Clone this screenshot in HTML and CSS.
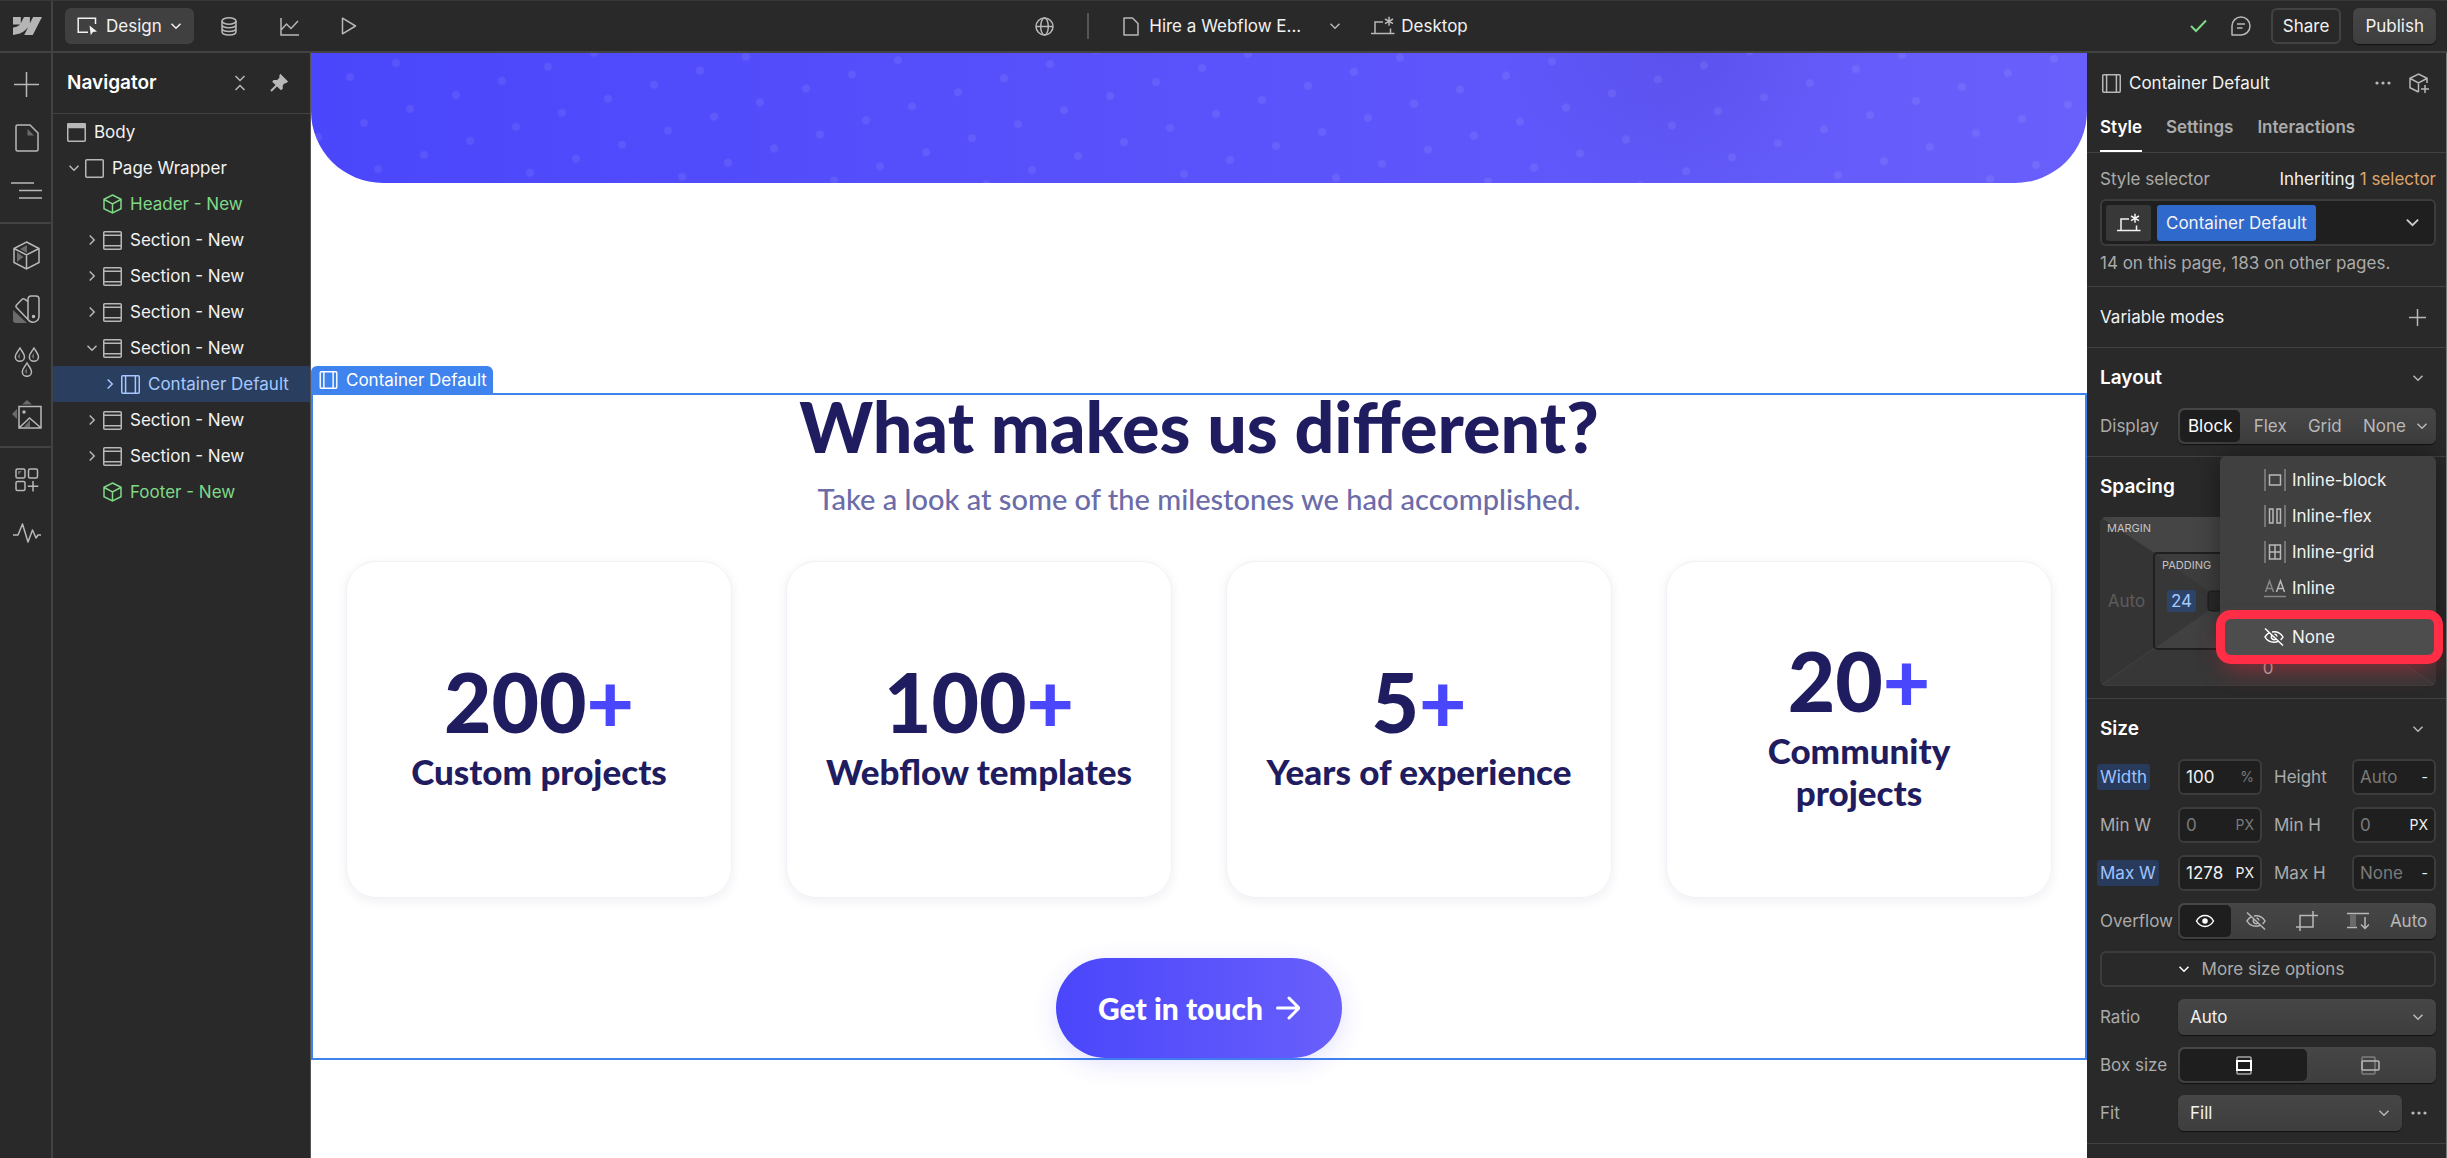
FILE: index.html
```html
<!DOCTYPE html>
<html lang="en">
<head>
<meta charset="UTF-8" />
<meta name="viewport" content="width=device-width, initial-scale=1" />
<title>Designer</title>
<link rel="stylesheet" href="styles.css">
</head>
<body>

<!-- Shared icons -->
<svg class="sprite" aria-hidden="true">
  <symbol id="i-section" viewBox="0 0 19 19"><rect x=".75" y=".75" width="17.5" height="17.5" rx="1"/><path d="M1 4.2h17M1 14.8h17"/></symbol>
  <symbol id="i-container" viewBox="0 0 19 19"><rect x=".75" y=".75" width="17.5" height="17.5" rx="1"/><path d="M4.6 1v17M14.4 1v17"/></symbol>
  <symbol id="i-box" viewBox="0 0 19 19"><rect x=".75" y=".75" width="17.5" height="17.5" rx="1"/></symbol>
  <symbol id="i-body" viewBox="0 0 19 19"><rect x=".75" y=".75" width="17.5" height="17.5" rx="1"/><path d="M1 1h17v3.4H1z" fill="currentColor"/></symbol>
  <symbol id="i-cube" viewBox="0 0 19 20"><path d="M9.5 1 18 5.3v9.4L9.5 19 1 14.7V5.3zM1.2 5.5l8.3 4.3 8.3-4.3M9.5 9.8V19"/></symbol>
  <symbol id="i-down" viewBox="0 0 12 12"><path d="M1.5 3.7 6 8.2l4.5-4.5"/></symbol>
  <symbol id="i-right" viewBox="0 0 12 12"><path d="M3.7 1.5 8.2 6l-4.500 4.5"/></symbol>
  <symbol id="i-dots" viewBox="0 0 18 18"><g fill="currentColor" stroke="none"><circle cx="3" cy="9" r="1.6"/><circle cx="9" cy="9" r="1.6"/><circle cx="15" cy="9" r="1.6"/></g></symbol>
  <symbol id="i-desktop" viewBox="0 0 24 20"><path d="M0 17.5h23.5M4 17V6h8M19.5 12.5V17M18 .8v9M14 3l8 4.600M22 3l-8 4.600"/></symbol>
  <symbol id="i-hide" viewBox="0 0 20 20"><path d="M1 1.5 19 18.5M5 5.8C3 7 1.8 8.7 1 10c1.800 3.200 5 5.200 9 5.200 1.300 0 2.600-.2 3.700-.7M8 4.900c.6-.1 1.300-.1 2-.1 4 0 7.200 2 9 5.200-.5 1-1.400 2-2.400 2.900M7.500 8.500c-1 3 2 5.300 4.500 3.500M10.500 7c1.400.2 2.300 1.200 2.500 2.500"/></symbol>
</svg>

<div id="app">
  <header class="topbar">
    <div class="top-left">
      <a class="logo" href="#" aria-label="Home">
        <svg width="29" height="18" viewBox="0 0 29 18"><path fill="#b5b5b5" d="M29 0 19.800 18h-8.600L15 10.600h-.2C11.600 14.700 6.900 17.400 0 18v-7.400s4.400-.3 7-3H0V0h7.800v6.300L11 0h5.900v6.300L20.100 0z"/></svg>
      </a>
      <button class="design-btn">
        <svg width="21" height="19" viewBox="0 0 21 19"><path d="M11 15.2H1.2V1.2h17.300V7"/><path d="m12.500 8.500 7.500 6-4 .6-2.200 3.200z" fill="currentColor" stroke="none"/></svg>
        Design
        <svg width="12" height="12"><use href="#i-down"/></svg>
      </button>
      <div class="tools">
        <button aria-label="CMS"><svg width="18" height="19" viewBox="0 0 18 19"><ellipse cx="9" cy="4" rx="7" ry="3.2"/><path d="M2 4v10.800C2 16.600 5 18 9 18s7-1.400 7-3.200V4M2 7.600c0 1.800 3 3.200 7 3.200s7-1.400 7-3.200M2 11.200c0 1.800 3 3.200 7 3.200s7-1.400 7-3.200"/></svg></button>
        <button aria-label="Insights"><svg width="19" height="19" viewBox="0 0 19 19"><path d="M1 1v17h18M1.500 12.500 6.500 7l4.500 4.500L18 4"/></svg></button>
        <button aria-label="Preview"><svg width="16" height="18" viewBox="0 0 16 18"><path d="M1.500 1.200v15.600L14.500 9z" stroke-linejoin="round"/></svg></button>
      </div>
    </div>

    <div class="top-center">
      <button aria-label="Locale"><svg width="19" height="19" viewBox="0 0 19 19"><circle cx="9.5" cy="9.5" r="8.5"/><ellipse cx="9.5" cy="9.5" rx="3.8" ry="8.5"/><path d="M1 9.500h17"/></svg></button>
      <span class="sep"></span>
      <button class="page-btn">
        <svg width="16" height="19" viewBox="0 0 16 19"><path d="M1 1h8.500L15 6.500V18H1z" stroke-linejoin="round"/></svg>
        <span class="page-name">Hire a Webflow E...</span>
        <svg width="12" height="12"><use href="#i-down"/></svg>
      </button>
      <button class="device-btn"><svg width="24" height="20"><use href="#i-desktop"/></svg>Desktop</button>
    </div>

    <div class="top-right">
      <svg class="green" width="17" height="14" viewBox="0 0 17 14"><path d="m1 7 5 5L16 1.500" stroke-width="2"/></svg>
      <button aria-label="Comments"><svg width="20" height="20" viewBox="0 0 20 20"><path d="M1 19v-9a9 9 0 1 1 9 9zM6 8h8M6 12h5.500" stroke-linejoin="round"/></svg></button>
      <button class="share">Share</button>
      <button class="publish">Publish</button>
    </div>
  </header>

  <div class="workspace">
    <nav class="rail" aria-label="Panels">
      <div class="rail-group">
        <button aria-label="Add"><svg width="25" height="25" viewBox="0 0 25 25"><path d="M12.500 0v25M0 12.500h25"/></svg></button>
        <button aria-label="Pages"><svg width="24" height="28" viewBox="0 0 24 28"><path d="M2.500 1H15l8 8v16.500a1.500 1.500 0 0 1-1.500 1.500h-19A1.500 1.500 0 0 1 1 25.500v-23A1.500 1.500 0 0 1 2.500 1z"/><path d="M12.500 5v6.500H19z" class="shade"/></svg></button>
        <button aria-label="Navigator"><svg width="31" height="17" viewBox="0 0 31 17"><path d="M0 1h23M8 8.500h23M8 16h23"/></svg></button>
      </div>
      <div class="rail-group">
        <button aria-label="Components"><svg width="27" height="29" viewBox="0 0 27 29"><path class="shade" d="M14 4v8L7 8zM4 11l6.500 5L4 21z"/><path d="M13.500 1 26 7.500v14L13.500 28 1 21.500v-14zM1 7.500 13.500 14 26 7.500M13.500 14v14"/></svg></button>
        <button aria-label="Variables"><svg width="28" height="28" viewBox="0 0 28 28"><path class="shade" d="M0 15l14 13H3a3 3 0 0 1-3-3z"/><path d="M15 4a3 3 0 0 1 3-3h5a3 3 0 0 1 3 3v17a6 6 0 0 1-11 3.500zM15 6.500 11.500 4.200a2 2 0 0 0-2.600.3L3.500 10a2 2 0 0 0 0 2.600L15 24.500"/><circle cx="20.500" cy="21.500" r="1" fill="currentColor"/></svg></button>
        <button aria-label="Styles"><svg width="26" height="30" viewBox="0 0 26 30"><path d="M6 1c2 3.500 4.500 6 4.500 8.700a4.600 4.600 0 0 1-9.200 0C1.300 7 4 4.500 6 1zM20 1c2 3.500 4.500 6 4.500 8.700a4.600 4.600 0 0 1-9.200 0C15.300 7 18 4.500 20 1zM13 16c2 3.500 4.500 6 4.500 8.700a4.600 4.600 0 0 1-9.200 0C8.300 22 11 19.500 13 16z"/><path class="shade" d="M6 6v6L3.500 9.500zM20 6v6l-2.500-2.500zM13 21v6l-2.500-2.500z"/></svg></button>
        <button aria-label="Assets"><svg width="32" height="29" viewBox="0 0 32 29"><path class="shade" d="M11 4.500 16 0l5 4.500zM6 9v10l-5-5zM13 27l6-7v7z"/><path d="M8 6.500h22V28H8zM8.500 27.500 18.500 18 29.500 27.500"/><circle cx="13" cy="12" r="1" fill="currentColor"/></svg></button>
      </div>
      <div class="rail-group">
        <button aria-label="Apps"><svg width="24" height="24" viewBox="0 0 24 24"><rect x="1" y="1" width="9" height="9" rx="1.5"/><rect x="13.5" y="1" width="9" height="9" rx="1.5"/><rect x="1" y="13.5" width="9" height="9" rx="1.5"/><path d="M18 13v10.500M12.800 18.200h10.500"/><path class="shade" d="M3 3h4L3 7z"/></svg></button>
        <button aria-label="Audit"><svg width="28" height="20" viewBox="0 0 28 20"><path d="M0 12h5L9.500 1 15 19l4.500-12L23 15l2-3h3" stroke-linejoin="round"/></svg></button>
      </div>
    </nav>

    <aside class="navigator">
      <div class="nav-head">
        <h2>Navigator</h2>
        <button aria-label="Collapse all"><svg width="12" height="16" viewBox="0 0 12 16"><path d="m1.500 1 4.500 4.500L10.500 1M1.500 15 6 10.500l4.500 4.500"/></svg></button>
        <button aria-label="Pin"><svg width="18" height="18" viewBox="0 0 18 18"><path d="M1 17l6-6" stroke-width="2"/><path d="m10.500 1 6.500 6.500-1.300.9-1-.2-2.700 2.800v3.500l-1 .8L3.200 7.700l.8-1H7.500l2.800-3-.3-1.500z" fill="currentColor"/></svg></button>
      </div>
      <ul class="tree">
        <li class="lv0"><svg class="tw"></svg><svg width="19" height="19"><use href="#i-body"/></svg>Body</li>
        <li class="lv1"><svg class="tw"><use href="#i-down"/></svg><svg width="19" height="19"><use href="#i-box"/></svg>Page Wrapper</li>
        <li class="lv2 green"><svg class="tw"></svg><svg width="19" height="20"><use href="#i-cube"/></svg>Header - New</li>
        <li class="lv2"><svg class="tw"><use href="#i-right"/></svg><svg width="19" height="19"><use href="#i-section"/></svg>Section - New</li>
        <li class="lv2"><svg class="tw"><use href="#i-right"/></svg><svg width="19" height="19"><use href="#i-section"/></svg>Section - New</li>
        <li class="lv2"><svg class="tw"><use href="#i-right"/></svg><svg width="19" height="19"><use href="#i-section"/></svg>Section - New</li>
        <li class="lv2"><svg class="tw"><use href="#i-down"/></svg><svg width="19" height="19"><use href="#i-section"/></svg>Section - New</li>
        <li class="lv3 selected"><svg class="tw"><use href="#i-right"/></svg><svg width="19" height="19"><use href="#i-container"/></svg>Container Default</li>
        <li class="lv2"><svg class="tw"><use href="#i-right"/></svg><svg width="19" height="19"><use href="#i-section"/></svg>Section - New</li>
        <li class="lv2"><svg class="tw"><use href="#i-right"/></svg><svg width="19" height="19"><use href="#i-section"/></svg>Section - New</li>
        <li class="lv2 green"><svg class="tw"></svg><svg width="19" height="20"><use href="#i-cube"/></svg>Footer - New</li>
      </ul>
    </aside>

    <main class="canvas">
      <div class="hero">
        <svg width="100%" height="100%">
          <defs>
            <pattern id="dots" width="48.08" height="48.08" patternUnits="userSpaceOnUse" patternTransform="translate(39 24) rotate(-17) translate(-24 -24)">
              <circle cx="24" cy="24" r="4" fill="#fff" fill-opacity=".08"/>
            </pattern>
          </defs>
          <rect width="100%" height="100%" fill="url(#dots)"/>
        </svg>
      </div>

      <section class="stage">
        <span class="sel-tag"><svg width="19" height="18"><use href="#i-container"/></svg>Container Default</span>
        <div class="container">
          <h1>What makes us different?</h1>
          <p class="lead">Take a look at some of the milestones we had accomplished.</p>
          <div class="cards">
            <article class="card"><strong>200<i>+</i></strong><h3>Custom projects</h3></article>
            <article class="card"><strong>100<i>+</i></strong><h3>Webflow templates</h3></article>
            <article class="card"><strong>5<i>+</i></strong><h3>Years of experience</h3></article>
            <article class="card"><strong>20<i>+</i></strong><h3>Community<br>projects</h3></article>
          </div>
          <a class="cta" href="#">Get in touch
            <svg width="24" height="24" viewBox="0 0 24 24"><path d="M1.500 12h21M13 2l10 10-10 10" stroke-width="3" stroke-linecap="round" stroke-linejoin="round"/></svg>
          </a>
        </div>
      </section>
    </main>

    <aside class="panel">
      <div class="panel-head">
        <svg width="19" height="19"><use href="#i-container"/></svg>
        <span class="grow">Container Default</span>
        <button aria-label="More"><svg width="18" height="18"><use href="#i-dots"/></svg></button>
        <button aria-label="Create component"><svg width="20" height="20" viewBox="0 0 20 20"><path d="M9.500 19 1 14.700V5.300L9.500 1 18 5.300V10M1.200 5.500l8.300 4.300L17.800 5.500M9.500 9.800V19M16 12v8M12 16h8"/></svg></button>
      </div>
      <div class="tabs">
        <button class="active">Style</button>
        <button>Settings</button>
        <button>Interactions</button>
      </div>

      <section class="selector">
        <div class="selector-head"><span>Style selector</span><span class="inherit">Inheriting <a href="#">1 selector</a></span></div>
        <div class="selector-box">
          <button class="state" aria-label="Breakpoint"><svg width="24" height="20"><use href="#i-desktop"/></svg></button>
          <button class="token">Container Default</button>
          <button class="open" aria-label="Open"><svg width="15" height="15"><use href="#i-down"/></svg></button>
        </div>
        <p>14 on this page, 183 on other pages.</p>
      </section>

      <section class="variable">
        <span>Variable modes</span>
        <button aria-label="Add mode"><svg width="17" height="17" viewBox="0 0 17 17"><path d="M8.500 0v17M0 8.500h17"/></svg></button>
      </section>

      <section>
        <div class="sec-head"><h2>Layout</h2><button aria-label="Collapse"><svg width="12" height="12"><use href="#i-down"/></svg></button></div>
        <div class="row">
          <span class="lbl">Display</span>
          <div class="seg display">
            <button class="on">Block</button><button>Flex</button><button>Grid</button><button class="none">None <svg width="12" height="12"><use href="#i-down"/></svg></button>
            <div class="menu">
              <button><svg width="22" height="22" viewBox="0 0 22 22"><path d="M1 0v22M21 0v22" opacity=".6"/><rect x="5.5" y="6" width="11" height="10"/></svg>Inline-block</button>
              <button><svg width="22" height="22" viewBox="0 0 22 22"><path d="M1 0v22M21 0v22" opacity=".6"/><rect x="5.5" y="4" width="3.5" height="14"/><rect x="13" y="4" width="3.5" height="14"/></svg>Inline-flex</button>
              <button><svg width="22" height="22" viewBox="0 0 22 22"><path d="M1 0v22M21 0v22" opacity=".6"/><path d="M5.500 4h11v14h-11zM11 4v14M5.500 11h11"/></svg>Inline-grid</button>
              <button><svg width="22" height="22" viewBox="0 0 22 22"><path d="M0 19.500h22M1.500 15 5.500 4l4 11M2.800 11.500h5.400" opacity=".6"/><path d="m12.500 15 4-11 4 11M13.800 11.500h5.400"/></svg>Inline</button>
              <button class="picked"><svg width="20" height="20"><use href="#i-hide"/></svg>None</button>
            </div>
          </div>
        </div>
      </section>

      <section>
        <div class="sec-head"><h2>Spacing</h2></div>
        <div class="spacing">
          <svg class="bevel" viewBox="0 0 336 169" preserveAspectRatio="none">
            <path d="M0 0h336v169H0z" fill="#343434"/>
            <path d="M0 0h336l-53 35H53z" fill="#454545"/>
            <path d="M0 169h336l-53-37H53z" fill="#373737" stroke="#424242"/>
          </svg>
          <span class="sp-name">Margin</span>
          <button class="sp-left">Auto</button>
          <button class="sp-bottom">0</button>
          <div class="padding">
            <svg class="bevel" viewBox="0 0 226 94" preserveAspectRatio="none">
              <path d="M0 0h226v94H0z" fill="#373737"/>
              <path d="M0 0h226l-53 37H53z" fill="#3d3d3d"/>
              <path d="M0 94h226l-53-37H53z" fill="#414141"/>
              <rect x="53" y="37" width="120" height="20" rx="3" fill="#292929" stroke="#1d1d1d"/>
            </svg>
            <span class="sp-name">Padding</span>
            <button class="sp-val">24</button>
          </div>
        </div>
      </section>

      <section>
        <div class="sec-head"><h2>Size</h2><button aria-label="Collapse"><svg width="12" height="12"><use href="#i-down"/></svg></button></div>
        <div class="sizes">
          <label class="lbl set" for="w">Width</label><div class="field"><input id="w" value="100"><span class="unit dim">%</span></div>
          <label class="lbl" for="h">Height</label><div class="field"><input id="h" placeholder="Auto"><span class="unit">-</span></div>
          <label class="lbl" for="minw">Min W</label><div class="field"><input id="minw" placeholder="0"><span class="unit dim">PX</span></div>
          <label class="lbl" for="minh">Min H</label><div class="field"><input id="minh" placeholder="0"><span class="unit">PX</span></div>
          <label class="lbl set" for="maxw">Max W</label><div class="field"><input id="maxw" value="1278"><span class="unit">PX</span></div>
          <label class="lbl" for="maxh">Max H</label><div class="field"><input id="maxh" placeholder="None"><span class="unit">-</span></div>
        </div>
        <div class="row">
          <span class="lbl">Overflow</span>
          <div class="seg five">
            <button class="on" aria-label="Visible"><svg width="20" height="14" viewBox="0 0 20 14"><path d="M1.500 7c2-3.500 5-5.400 8.500-5.400S16.500 3.500 18.500 7c-2 3.500-5 5.400-8.500 5.400S3.500 10.500 1.500 7z"/><circle cx="10" cy="7" r="2" fill="currentColor"/></svg></button>
            <button aria-label="Hidden"><svg width="20" height="20"><use href="#i-hide"/></svg></button>
            <button aria-label="Clip"><svg width="22" height="20" viewBox="0 0 22 20"><path d="M4 20V4.500h18M0 16h17V0"/></svg></button>
            <button aria-label="Scroll"><svg width="22" height="18" viewBox="0 0 22 18"><path d="M0 1.500h22M0 15.500h10M18 5v11M14 12.500l4 4 4-4"/><path class="shade" d="M3 2h6v13H3z"/></svg></button>
            <button>Auto</button>
          </div>
        </div>
        <button class="more"><svg width="12" height="12"><use href="#i-down"/></svg>More size options</button>
        <div class="row">
          <label class="lbl" for="ratio">Ratio</label>
          <div class="select"><select id="ratio"><option>Auto</option></select><svg width="12" height="12"><use href="#i-down"/></svg></div>
        </div>
        <div class="row">
          <span class="lbl">Box size</span>
          <div class="seg two">
            <button class="on" aria-label="Border box"><svg width="16" height="19" viewBox="0 0 16 19"><rect x="1" y="1" width="14" height="17" rx="1" opacity=".6"/><rect x="1" y="5" width="14" height="9" stroke-width="2"/></svg></button>
            <button aria-label="Content box"><svg width="19" height="19" viewBox="0 0 19 19"><rect x="1" y="1" width="13" height="17" rx="1" opacity=".5"/><rect x="1" y="5" width="17" height="9" rx="1"/></svg></button>
          </div>
        </div>
        <div class="row">
          <label class="lbl" for="fit">Fit</label>
          <div class="select"><select id="fit"><option>Fill</option></select><svg width="12" height="12"><use href="#i-down"/></svg></div>
          <button class="fit-more" aria-label="Position"><svg width="18" height="18"><use href="#i-dots"/></svg></button>
        </div>
      </section>
    </aside>
  </div>
</div>

</body>
</html>
```

FILE: styles.css
```css
:root {
  --bg: #292929;
  --line: #424242;
  --text: #f2f2f2;
  --muted: #ababab;
  --dim: #7a7a7a;
  --green: #7fd987;
  --blue: #3f83ee;
  --navy: #1f1c5f;
  --control: linear-gradient(#464646, #3e3e3e);
}

* {
  box-sizing: border-box;
}

html, body {
  margin: 0;
  height: 100%;
  overflow: hidden;
  font-family: Inter, sans-serif;
  font-size: 17px;
  line-height: 24px;
  color: var(--text);
  background: var(--bg);
}

button, input, select {
  font: inherit;
  color: inherit;
  border: 0;
  padding: 0;
  margin: 0;
  background: none;
}

button {
  display: flex;
  align-items: center;
  justify-content: center;
}

h1, h2, h3, p, ul {
  margin: 0;
  padding: 0;
}

svg {
  flex: none;
  fill: none;
  stroke: currentColor;
  stroke-width: 1.5px;
}

.sprite {
  position: absolute;
  width: 0;
  height: 0;
}

.shade {
  fill: #6b6b6b;
  stroke: none;
}

.green {
  color: var(--green);
}

.grow {
  flex: 1;
}

#app {
  height: 100%;
  display: flex;
  flex-direction: column;
}

/* Top bar */
.topbar {
  flex: none;
  display: grid;
  grid-template-columns: 1fr auto 1fr;
  height: 53px;
  border-top: 1px solid #383838;
  border-bottom: 2px solid var(--line);
}

.top-left, .top-center, .top-right, .tools {
  display: flex;
  align-items: center;
}

.logo {
  display: flex;
  align-items: center;
  align-self: stretch;
  width: 53px;
  padding-left: 13px;
  border-right: 2px solid var(--line);
}

.logo svg {
  stroke: none;
}

.design-btn {
  gap: 8px;
  height: 36px;
  margin-left: 12px;
  padding: 0 12px;
  border-radius: 6px;
  background: #404040;
}

.tools {
  margin-left: 26px;
  gap: 42px;
  color: #b8b8b8;
}

.top-center {
  padding-left: 56px;
}

.top-center svg {
  color: #b8b8b8;
}

.sep {
  width: 2px;
  height: 26px;
  margin: 0 34px 0 33px;
  background: #555;
}

.page-btn {
  gap: 10px;
}

.page-name {
  margin-right: 18px;
}

.device-btn {
  gap: 6px;
  margin-left: 30px;
}

.top-right {
  justify-content: flex-end;
  padding-right: 11px;
}

.top-right > button:nth-of-type(1) {
  margin: 0 20px 0 24px;
  color: #b8b8b8;
}

.share, .publish {
  height: 36px;
  padding: 0 12px;
  border-radius: 6px;
}

.share {
  border: 2px solid var(--line);
  margin-right: 12px;
  padding: 0 10px;
}

.publish {
  background: var(--control);
  box-shadow: 0 1px 1px #111;
}

.workspace {
  flex: 1;
  min-height: 0;
  display: flex;
}

/* Left rail */
.rail {
  flex: none;
  width: 53px;
  border-right: 2px solid var(--line);
  color: #b8b8b8;
}

.rail-group {
  padding: 5px 0;
}

.rail-group + .rail-group {
  border-top: 2px solid var(--line);
}

.rail button {
  width: 100%;
  height: 53px;
  padding-left: 2px;
}

/* Navigator */
.navigator {
  flex: none;
  width: 258px;
  border-right: 1px solid #555;
}

.nav-head {
  display: flex;
  align-items: center;
  gap: 24px;
  height: 61px;
  padding: 0 22px 0 14px;
  border-bottom: 1px solid var(--line);
  color: #b8b8b8;
}

.nav-head h2 {
  flex: 1;
}

h2 {
  font-size: 19px;
  font-weight: 600;
  color: #fff;
}

.tree {
  list-style: none;
}

.tree li {
  display: flex;
  align-items: center;
  height: 36px;
}

.tree li > svg:nth-child(2) {
  margin-right: 8px;
}

.tree li:not(.green):not(.selected) > svg {
  color: #b8b8b8;
}

.tw {
  width: 12px;
  height: 12px;
  margin-right: 5px;
}

.lv0 { padding-left: 0; }
.lv0 .tw { width: 9px; }
.lv1 { padding-left: 15px; }
.lv2 { padding-left: 33px; }
.lv3 { padding-left: 51px; }

.tree .selected {
  background: #2a3f60;
  color: #a6c8ff;
}

/* Canvas */
.canvas {
  flex: 1;
  min-width: 0;
  overflow: hidden;
  background: #fff;
  font-family: Lato, sans-serif;
  color: var(--navy);
}

.hero {
  height: 130px;
  overflow: hidden;
  border-radius: 0 0 72px 72px;
  background:
    radial-gradient(circle at 77% -10%, rgba(60, 50, 180, .2), transparent 180px),
    linear-gradient(90deg, #4a46fb, #695ffb);
}

.hero svg {
  display: block;
  stroke: none;
}

.stage {
  padding-top: 183px;
}

.sel-tag {
  display: flex;
  align-items: center;
  gap: 8px;
  width: max-content;
  height: 27px;
  padding: 0 6px 0 8px;
  border-radius: 6px 6px 0 0;
  background: var(--blue);
  color: #fff;
  font-family: Inter, sans-serif;
}

.container {
  display: flex;
  flex-direction: column;
  align-items: center;
  padding: 0 33px;
  border: 2px solid var(--blue);
}

h1 {
  font-size: 70px;
  font-weight: 900;
  line-height: 62px;
}

.lead {
  margin: 19px 0 40px;
  font-size: 29px;
  font-weight: 500;
  line-height: 45px;
  color: #6b6ca8;
}

.cards {
  align-self: stretch;
  display: grid;
  grid-template-columns: repeat(4, 1fr);
  gap: 54px;
}

.card {
  display: flex;
  flex-direction: column;
  align-items: center;
  justify-content: center;
  gap: 16px;
  height: 337px;
  padding: 0 24px;
  border: 1px solid #f0f0f7;
  border-radius: 30px;
  box-shadow: 0 3px 12px rgba(31, 28, 95, .07);
  text-align: center;
}

.card strong {
  font-size: 82px;
  font-weight: 900;
  line-height: 66px;
}

.card i {
  font-style: normal;
  color: #4a46fb;
}

.card h3 {
  font-size: 35px;
  font-weight: 900;
  line-height: 42px;
}

.cta {
  display: flex;
  align-items: center;
  gap: 13px;
  height: 100px;
  margin-top: 60px;
  padding: 0 42px;
  border-radius: 50px;
  background: linear-gradient(90deg, #4a46fb, #695ffb);
  box-shadow: 0 6px 24px rgba(74, 70, 251, .16);
  color: #fff;
  font-size: 30px;
  font-weight: 900;
  text-decoration: none;
}

/* Style panel */
.panel {
  flex: none;
  width: 360px;
  border-right: 1px solid #777;
  overflow: hidden;
}

.panel-head {
  display: flex;
  align-items: center;
  gap: 8px;
  height: 60px;
  padding: 0 17px 0 15px;
}

.panel-head svg {
  color: #b8b8b8;
}

.panel-head button + button {
  margin-left: 9px;
}

.tabs {
  display: flex;
  gap: 24px;
  height: 40px;
  padding: 0 13px;
  border-bottom: 1px solid var(--line);
}

.tabs button {
  align-items: flex-start;
  padding-top: 2px;
  font-weight: 600;
  color: var(--muted);
}

.tabs .active {
  color: #fff;
  border-bottom: 2px solid #fff;
}

.panel section {
  padding: 0 10px 12px 13px;
  border-bottom: 1px solid var(--line);
}

.panel .selector {
  padding-top: 14px;
  padding-bottom: 11px;
  color: var(--muted);
}

.selector-head {
  display: flex;
  justify-content: space-between;
}

.inherit {
  color: var(--text);
}

.inherit a {
  color: #dfa56c;
  text-decoration: none;
}

.selector-box {
  display: flex;
  align-items: center;
  gap: 6px;
  height: 47px;
  margin: 8px 0 5px;
  padding: 0 14px 0 4px;
  border: 2px solid #3c3c3c;
  border-radius: 6px;
  background: #1f1f1f;
  color: var(--text);
}

.state, .token {
  height: 36px;
  border-radius: 3px;
}

.state {
  width: 45px;
  background: #383838;
}

.token {
  padding: 0 9px;
  background: #3069cc;
}

.open {
  margin-left: auto;
  color: #ccc;
}

.panel .variable {
  display: flex;
  align-items: center;
  justify-content: space-between;
  height: 61px;
  padding: 0 20px 0 13px;
}

.variable button,
.sec-head button {
  color: #b8b8b8;
}

.sec-head {
  display: flex;
  align-items: center;
  justify-content: space-between;
  height: 60px;
  padding-right: 12px;
}

.row {
  display: flex;
  align-items: center;
  height: 36px;
}

.row + .row, .more + .row, .sizes + .row {
  margin-top: 12px;
}

.lbl {
  color: var(--muted);
}

.row .lbl {
  width: 78px;
}

.seg {
  flex: 1;
  display: flex;
  height: 36px;
  padding: 2px;
  border-radius: 6px;
  background: var(--control);
  box-shadow: 0 1px 1px #111;
  color: #b8b8b8;
}

.seg .on {
  background: #1e1e1e;
  border-radius: 5px;
  color: #fff;
}

.five > button, .two > button {
  flex: 1;
}

.display {
  position: relative;
  justify-content: space-between;
}

.display > button {
  padding: 0 8px;
}

.display .none {
  gap: 10px;
  padding-right: 6px;
}

/* Display dropdown */
.menu {
  position: absolute;
  top: 48px;
  right: 0;
  z-index: 5;
  width: 216px;
  padding: 6px 2px 0 5px;
  border-radius: 6px;
  background: #404040;
  box-shadow: 0 0 24px rgba(0, 0, 0, .4);
  color: var(--text);
}

.menu button {
  justify-content: flex-start;
  gap: 6px;
  width: 100%;
  height: 36px;
  padding-left: 39px;
}

.menu svg {
  color: #b8b8b8;
}

.menu .picked {
  gap: 8px;
  margin-top: 13px;
  border-radius: 6px;
  background: #4d4d4d;
  outline: 9px solid #ff2d46;
  box-shadow: 0 12px 24px rgba(255, 45, 70, .5);
}

.menu .picked svg {
  color: #fff;
}

/* Margin and padding editor */
.spacing {
  position: relative;
  display: grid;
  grid-template-columns: 53px 1fr 53px;
  grid-template-rows: 35px 98px 36px;
  border-radius: 6px;
  overflow: hidden;
}

.spacing > * {
  z-index: 1;
}

.spacing .bevel {
  position: absolute;
  inset: 0;
  z-index: 0;
  width: 100%;
  height: 100%;
  stroke-width: 1px;
}

.spacing .bevel path:not([stroke]) {
  stroke: none;
}

.sp-name {
  grid-area: 1 / 1 / 2 / 3;
  padding-left: 7px;
  font-size: 11px;
  line-height: 22px;
  text-transform: uppercase;
  color: #c4c4c4;
}

.sp-left {
  grid-area: 2 / 1;
  color: #5c5c5c;
}

.sp-bottom {
  grid-area: 3 / 2;
  color: var(--muted);
}

.padding {
  position: relative;
  grid-area: 2 / 2;
  display: grid;
  grid-template-columns: 53px 1fr;
  grid-template-rows: 37px 20px 37px;
  border: 2px solid #1f1f1f;
  border-radius: 5px;
  overflow: hidden;
}

.padding .sp-name,
.padding .sp-val {
  z-index: 1;
}

.sp-val {
  grid-area: 2 / 1;
  place-self: center;
  height: 22px;
  padding: 0 4px;
  border-radius: 3px;
  background: #2d4468;
  color: #a6c8ff;
}

/* Size fields */
.sizes {
  display: grid;
  grid-template-columns: 66px 1fr 66px 1fr;
  gap: 12px;
  align-items: center;
}

.set {
  justify-self: start;
  margin-left: -3px;
  padding: 1px 3px;
  border-radius: 3px;
  background: #283b5c;
  color: #9fc3ff;
}

.field {
  display: flex;
  align-items: center;
  height: 36px;
  padding: 0 6px;
  border: 2px solid #3c3c3c;
  border-radius: 6px;
  background: #1f1f1f;
}

.field input {
  flex: 1;
  width: 0;
  min-width: 0;
  outline: 0;
}

.field input::placeholder {
  color: var(--dim);
  opacity: 1;
}

.unit {
  font-size: 14px;
}

.dim {
  color: var(--dim);
}

.more {
  gap: 12px;
  width: 100%;
  height: 36px;
  margin: 12px 0;
  padding-right: 14px;
  border: 2px solid #3c3c3c;
  border-radius: 6px;
  color: var(--muted);
}

.more svg {
  color: #fff;
}

.select {
  flex: 1;
  display: grid;
  align-items: center;
  height: 36px;
  border-radius: 6px;
  background: var(--control);
  box-shadow: 0 1px 1px #111;
}

.select select {
  grid-area: 1 / 1;
  width: 100%;
  height: 36px;
  padding: 0 12px;
  appearance: none;
}

.select svg {
  grid-area: 1 / 1;
  justify-self: end;
  margin-right: 12px;
  color: #b8b8b8;
  pointer-events: none;
}

.fit-more {
  width: 34px;
  color: #b8b8b8;
}
```
